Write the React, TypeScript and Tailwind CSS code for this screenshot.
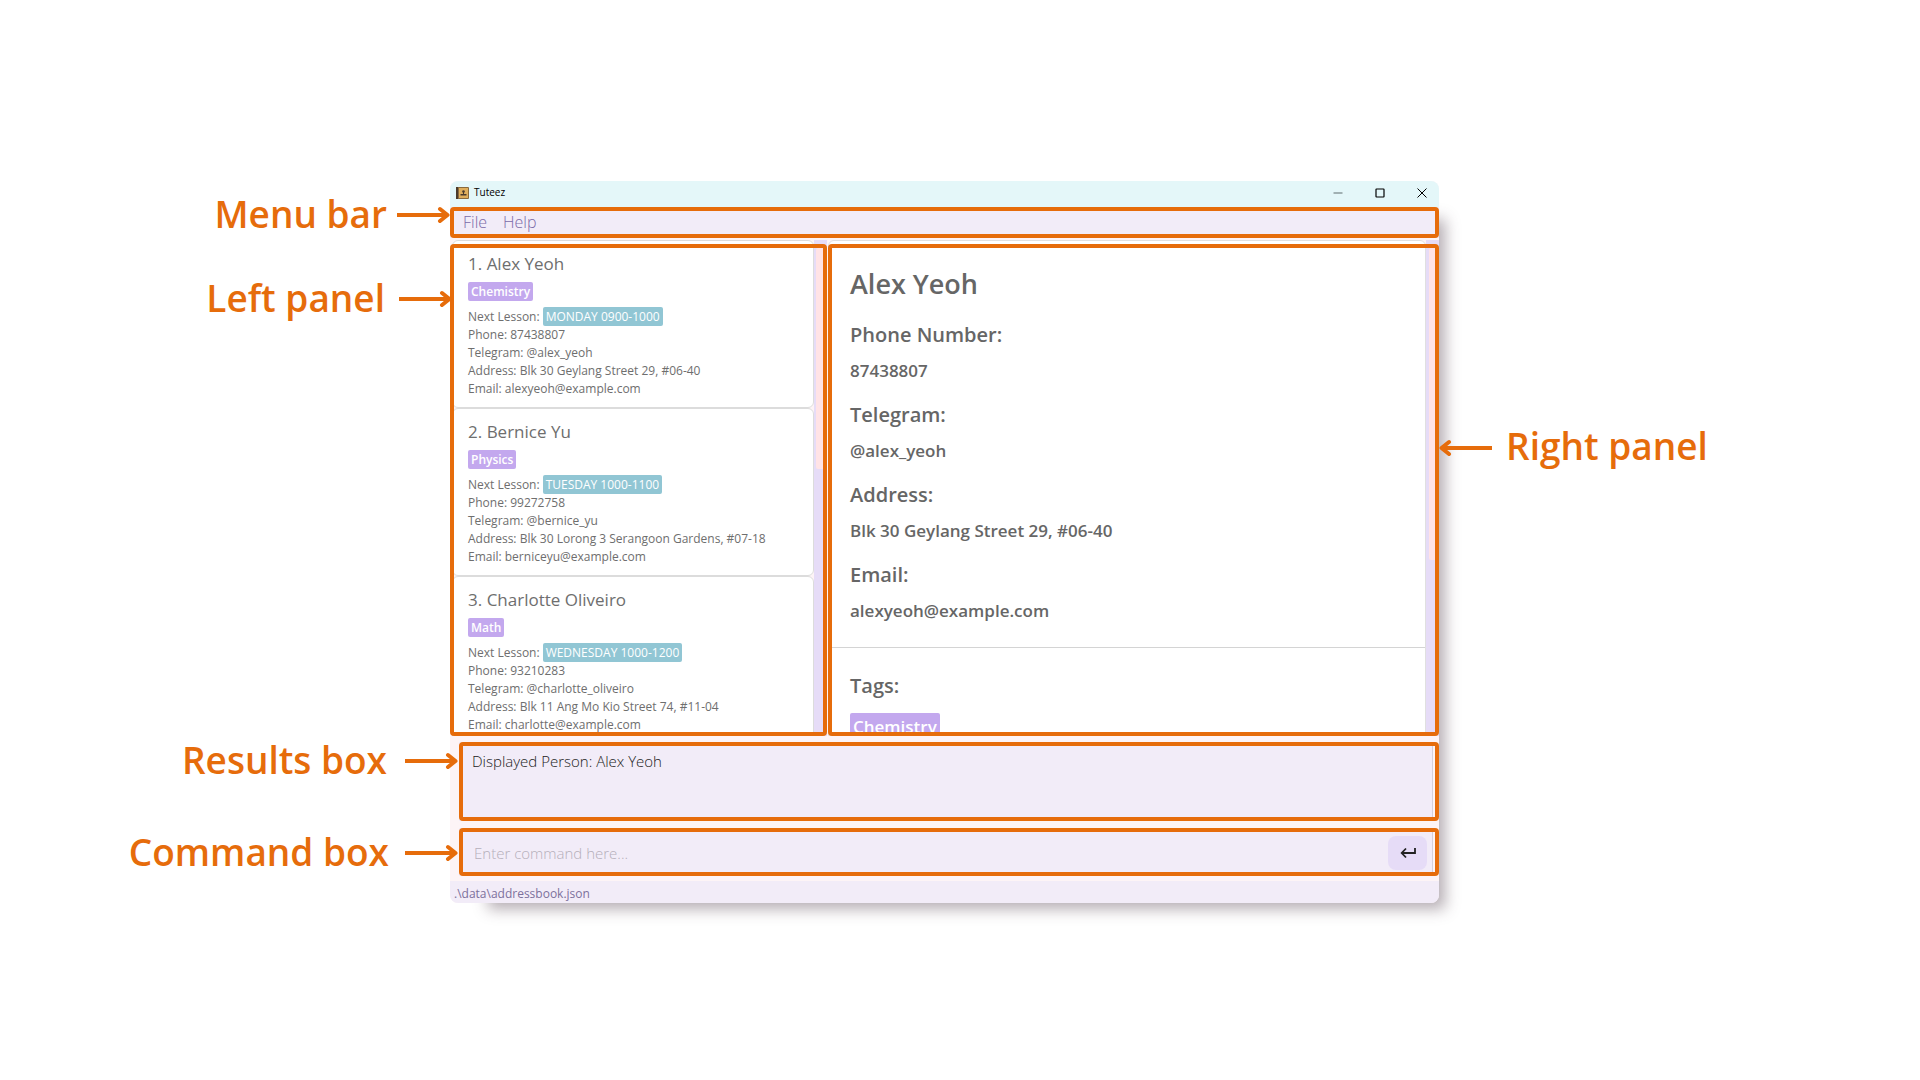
import { useState } from 'react';

type Person = {
  name: string;
  tag: string;
  lesson: string;
  phone: string;
  telegram: string;
  address: string;
  email: string;
};

const people: Person[] = [
  {
    name: 'Alex Yeoh',
    tag: 'Chemistry',
    lesson: 'MONDAY 0900-1000',
    phone: '87438807',
    telegram: '@alex_yeoh',
    address: 'Blk 30 Geylang Street 29, #06-40',
    email: 'alexyeoh@example.com',
  },
  {
    name: 'Bernice Yu',
    tag: 'Physics',
    lesson: 'TUESDAY 1000-1100',
    phone: '99272758',
    telegram: '@bernice_yu',
    address: 'Blk 30 Lorong 3 Serangoon Gardens, #07-18',
    email: 'berniceyu@example.com',
  },
  {
    name: 'Charlotte Oliveiro',
    tag: 'Math',
    lesson: 'WEDNESDAY 1000-1200',
    phone: '93210283',
    telegram: '@charlotte_oliveiro',
    address: 'Blk 11 Ang Mo Kio Street 74, #11-04',
    email: 'charlotte@example.com',
  },
];

/* Orange outline laid over a region of the window. */
function Frame({ className = 'inset-0' }: { className?: string }) {
  return (
    <div
      aria-hidden="true"
      className={`pointer-events-none absolute z-10 rounded-[4px] border-4 border-[#e66c0b] ${className}`}
    />
  );
}

function Arrow({ flip = false }: { flip?: boolean }) {
  return (
    <svg
      width="53"
      height="18"
      viewBox="0 0 53 18"
      fill="none"
      stroke="#e66c0b"
      strokeWidth="4"
      aria-hidden="true"
      className={flip ? 'shrink-0 rotate-180' : 'shrink-0'}
    >
      <path d="M0 9H50" />
      <path d="M43 3L50.500 9L43 15" strokeLinecap="round" strokeLinejoin="round" />
    </svg>
  );
}

function Callout({ text, className }: { text: string; className: string }) {
  return (
    <div className={`relative z-20 flex h-14 items-center justify-end ${className}`}>
      <span className="pb-[2px]">{text}</span>
      <Arrow />
    </div>
  );
}

function BookIcon() {
  return (
    <svg width="13" height="12" viewBox="0 0 13 12" aria-hidden="true">
      <rect width="13" height="12" rx="1" fill="#8a6a3c" />
      <rect width="2" height="12" fill="#4a3b2c" />
      <rect x="3" y="1" width="9" height="10" fill="#dfae5c" />
      <circle cx="7.500" cy="4.500" r="1.300" fill="#4a3b2c" />
      <path d="M7 5H8V7H10.500V8.500H4.500V7H7Z" fill="#4a3b2c" />
    </svg>
  );
}

function PersonCard({ person, index }: { person: Person; index: number }) {
  return (
    <li className="h-[168px] shrink-0 rounded-md border border-[#dcdcdc] bg-white pt-[11px] pl-[15px] text-xs leading-[18px] text-[#6e6e6e]">
      <h2 className="text-[17px] leading-6">
        {index}. {person.name}
      </h2>
      <div className="mt-[6px] flex">
        <span className="rounded-xs bg-[#c3a8ee] px-[3px] leading-[19px] font-semibold text-white">{person.tag}</span>
      </div>
      <p className="mt-[6px] flex h-[19px] items-center gap-[3px]">
        Next Lesson:
        <span className="rounded-xs bg-[#91c6d4] px-[3px] leading-[19px] text-white">{person.lesson}</span>
      </p>
      <p>Phone: {person.phone}</p>
      <p>Telegram: {person.telegram}</p>
      <p>Address: {person.address}</p>
      <p>Email: {person.email}</p>
    </li>
  );
}

function Field({ label, value }: { label: string; value: string }) {
  return (
    <div className="h-20">
      <dt className="text-xl leading-9 font-semibold">{label}</dt>
      <dd className="text-[17px] leading-9 font-semibold">{value}</dd>
    </div>
  );
}

export default function App() {
  const [command, setCommand] = useState('');
  const selected = people[0];

  return (
    <main className="grid min-h-screen grid-cols-[450fr_989fr_481fr] items-start bg-white pt-[181px] font-['Open_Sans',sans-serif]">
      <aside className="text-[37px] font-semibold whitespace-nowrap text-[#e66c0b]">
        <Callout text="Menu bar" className="mt-[6px] gap-[10px]" />
        <Callout text="Left panel" className="mt-7 -mr-[2px] gap-[14px]" />
        <Callout text="Results box" className="mt-[406px] -mr-2 gap-[18px]" />
        <Callout text="Command box" className="mt-9 -mr-2 gap-4" />
      </aside>

      <section className="min-w-0 rounded-lg bg-[#fdf4f6] shadow-[22px_22px_14px_-16px_rgba(70,50,65,0.4)]">
        <header className="flex h-[26px] items-center rounded-t-lg bg-[#e4f7f9] pr-[10px] pb-[3px] pl-[6px]">
          <BookIcon />
          <h1 className="ml-[5px] text-[10px] text-black">Tuteez</h1>
          <div className="ml-auto flex gap-7 text-black">
            <button type="button" aria-label="Minimize" className="flex h-4 w-[14px] items-center justify-center">
              <svg width="10" height="10" viewBox="0 0 10 10" stroke="#8b9a9b" strokeWidth="1.500">
                <path d="M0.500 5H9.500" />
              </svg>
            </button>
            <button type="button" aria-label="Maximize" className="flex h-4 w-[14px] items-center justify-center">
              <svg width="10" height="10" viewBox="0 0 10 10" fill="none" stroke="currentColor" strokeWidth="1.200">
                <rect x="1" y="1" width="8" height="8" rx="0.500" />
              </svg>
            </button>
            <button type="button" aria-label="Close" className="flex h-4 w-[14px] items-center justify-center">
              <svg width="10" height="10" viewBox="0 0 10 10" stroke="currentColor">
                <path d="M0.500 0.500L9.500 9.500M9.500 0.500L0.500 9.500" />
              </svg>
            </button>
          </div>
        </header>

        <nav className="relative flex h-[31px] items-center gap-4 bg-[#f2ecf8] pb-[2px] pl-[13px] text-base font-light text-[#7a6aa8]">
          <button type="button">File</button>
          <button type="button">Help</button>
          <Frame />
        </nav>

        <div className="mt-[2px] grid h-[496px] grid-cols-[377fr_611fr] gap-px">
          <div className="relative flex min-w-0 overflow-hidden">
            <ul className="flex min-w-0 flex-1 flex-col overflow-hidden pl-[2px]">
              {people.map((p, i) => (
                <PersonCard key={p.name} person={p} index={i + 1} />
              ))}
            </ul>
            <div className="w-[13px] bg-[#e6dcf7] pt-2 pl-[2px]">
              <div className="h-[221px] rounded-xs bg-[#ffe3e6]" />
            </div>
            <Frame className="inset-x-0 top-1 bottom-0" />
          </div>

          <div className="relative flex min-w-0 overflow-hidden">
            <article className="min-w-0 flex-1 overflow-hidden rounded-t-md border border-[#e0e0e0] bg-white text-[#666666]">
              <h2 className="mt-[23px] pl-[21px] text-[27px] leading-10 font-semibold">{selected.name}</h2>
              <dl className="mt-[13px] pl-[21px]">
                <Field label="Phone Number:" value={selected.phone} />
                <Field label="Telegram:" value={selected.telegram} />
                <Field label="Address:" value={selected.address} />
                <Field label="Email:" value={selected.email} />
              </dl>
              <hr className="mt-[10px] border-[#d4d4d4]" />
              <h3 className="mt-5 pl-[21px] text-xl leading-9 font-semibold">Tags:</h3>
              <div className="mt-[9px] flex pl-[21px]">
                <span className="rounded-xs bg-[#c3a8ee] px-[3px] text-[17px] leading-7 font-semibold text-white">
                  {selected.tag}
                </span>
              </div>
            </article>
            <div className="w-[13px] bg-[#e6dcf7] pt-2 pl-[3px]">
              <div className="h-[312px] rounded-xs bg-[#ffe3e6]" />
            </div>
            <Frame className="inset-x-0 top-1 bottom-0" />
          </div>
        </div>

        <div className="relative mt-[6px] ml-[9px] h-[79px] pr-[6px]">
          <textarea
            readOnly
            aria-label="Results"
            value={`Displayed Person: ${selected.name}`}
            className="block size-full resize-none border-r border-[#d5d0dc] bg-[#f2ecf8] px-[13px] py-[7px] text-[15px] leading-6 font-light text-[#222222] outline-none"
          />
          <Frame />
        </div>

        <div className="relative mt-[7px] ml-[9px] h-12 pr-[6px]">
          <div className="flex h-full items-center border-r border-[#d5d0dc] bg-[#f2ecf8] pt-[2px] pr-[5px] pl-[15px]">
            <input
              type="text"
              aria-label="Command"
              value={command}
              onChange={(e) => setCommand(e.target.value)}
              placeholder="Enter command here..."
              className="min-w-0 flex-1 bg-transparent text-[15px] font-light text-[#333333] outline-none placeholder:text-[#b5afba]"
            />
            <button
              type="button"
              aria-label="Run command"
              className="flex h-[34px] w-[39px] items-center justify-center rounded-lg bg-[#e6dcf7] text-[#222222]"
            >
              <svg width="16" height="12" viewBox="0 0 16 12" fill="none" stroke="currentColor" strokeWidth="1.800">
                <path d="M15 1V6H2M6 1.500L1.700 6L6 10.500" />
              </svg>
            </button>
          </div>
          <Frame />
        </div>

        <footer className="mt-[5px] h-[22px] rounded-b-lg bg-[#f2ecf8] pl-1 text-xs leading-[26px] text-[#7d719c]">
          .\data\addressbook.json
        </footer>
      </section>

      <aside className="mt-[239px] flex h-14 items-center gap-[14px] text-[37px] font-semibold whitespace-nowrap text-[#e66c0b]">
        <Arrow flip />
        <span className="pb-1">Right panel</span>
      </aside>
    </main>
  );
}
